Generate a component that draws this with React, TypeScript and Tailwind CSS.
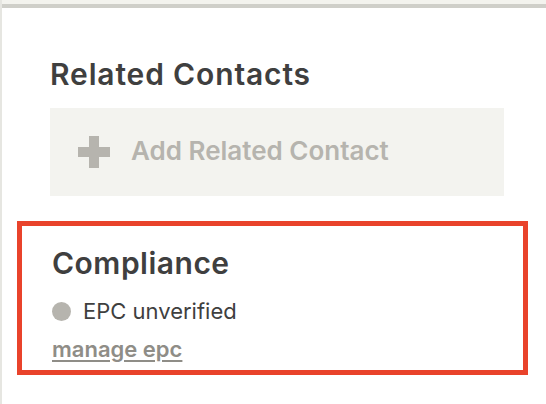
export default function App() {
  return (
    <div
      className="flex w-[546px] h-[404px] bg-white overflow-hidden"
      style={{ fontFamily: "Inter, 'Noto Sans', sans-serif" }}
    >
      {/* left rail */}
      <div className="w-[2px] shrink-0 bg-[#e6e6e1]" />

      <div className="flex flex-col flex-1">
        {/* top edge */}
        <div className="h-[4px] bg-[#f3f3ee]" />
        <div className="h-[4px] bg-[#cfcfc9]" />

        {/* Related Contacts */}
        <div className="pl-[48px] w-[502px]">
          <h2 className="mt-[49px] text-[30px] leading-[34px] font-semibold tracking-[0.85px] text-[#3f3f3f]">
            Related Contacts
          </h2>
          <button className="mt-[17px] flex items-center gap-[21px] w-[454px] h-[88px] pl-[28px] pb-[3px] bg-[#f3f3ef] text-left">
            <svg width="32" height="32" viewBox="0 0 32 32" className="shrink-0 mt-[3px]">
              <rect x="0" y="11" width="32" height="10" fill="#b6b4ae" />
              <rect x="11" y="0" width="10" height="32" fill="#b6b4ae" />
            </svg>
            <span className="text-[26px] leading-[30px] font-semibold text-[#b6b4ae]">
              Add Related Contact
            </span>
          </button>
        </div>

        {/* Compliance */}
        <div className="mt-[25px] ml-[15px] w-[511px] border-[5px] border-[#e9432b] pl-[30px] pt-[20px] pb-[8px]">
          <h2 className="text-[30px] leading-[34px] font-semibold tracking-[0.5px] text-[#3f3f3f]">
            Compliance
          </h2>
          <div className="mt-[18px] flex items-center gap-[12px]">
            <span className="w-[19px] h-[19px] rounded-full bg-[#b6b4ae]" />
            <span className="text-[22px] leading-[26px] text-[#3f3f3f]">
              EPC unverified
            </span>
          </div>
          <a
            href="#"
            className="block mt-[12px] text-[22px] leading-[26px] font-semibold text-[#8f8d87] underline underline-offset-[3px]"
          >
            manage epc
          </a>
        </div>
      </div>
    </div>
  );
}
